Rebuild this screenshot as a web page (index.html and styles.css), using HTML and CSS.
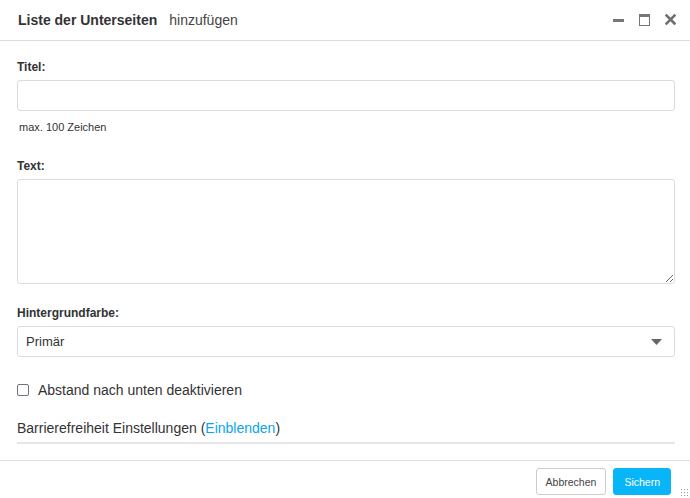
FILE: index.html
```html
<!DOCTYPE html>
<html lang="de">
<head>
  <meta charset="UTF-8" />
  <meta name="viewport" content="width=device-width, initial-scale=1.0"/>
  <title>Liste der Unterseiten hinzufügen</title>
  <link rel="stylesheet" href="styles.css">
</head>
<body>
  <div class="dialog">
    <div class="dialog-header">
      <div class="dialog-title"><b>Liste der Unterseiten</b><span>hinzufügen</span></div>
      <div class="window-buttons">
        <span class="btn-min"></span>
        <span class="btn-max"></span>
        <svg class="btn-close" width="11" height="11" viewBox="0 0 11 11">
          <path d="M1.5 1.5 L9.5 9.5 M9.5 1.5 L1.5 9.5" stroke="#707070" stroke-width="2.6" stroke-linecap="square"/>
        </svg>
      </div>
    </div>

    <div class="dialog-body">
      <label class="field-label" for="titel">Titel:</label>
      <input type="text" id="titel" class="field" />
      <div class="help">max. 100 Zeichen</div>

      <label class="field-label label-text" for="text">Text:</label>
      <textarea id="text" class="field area"></textarea>

      <label class="field-label label-bg" for="farbe">Hintergrundfarbe:</label>
      <div class="select">
        <span>Primär</span>
        <svg width="11" height="6" viewBox="0 0 11 6"><path d="M0 0 H11 L5.5 6 Z" fill="#666"/></svg>
      </div>

      <label class="check">
        <span class="box"></span>
        Abstand nach unten deaktivieren
      </label>

      <div class="a11y">Barrierefreiheit Einstellungen (<a href="#">Einblenden</a>)</div>
    </div>

    <div class="dialog-footer">
      <button class="btn btn-cancel">Abbrechen</button>
      <button class="btn btn-save">Sichern</button>
      <span class="grip"></span>
    </div>
  </div>
</body>
</html>
```

FILE: styles.css
```css
body {
  margin: 0;
  font-family: 'Liberation Sans', Arial, sans-serif;
  color: #333333;
  background: #ffffff;
}

.dialog {
  height: 498px;
  display: flex;
  flex-direction: column;
}

.dialog-header {
  height: 41px;
  flex: none;
  border-bottom: 1px solid #dddddd;
  display: flex;
  align-items: center;
  justify-content: space-between;
  padding: 0 14px 0 18px;
  box-sizing: border-box;
}

.dialog-title {
  font-size: 14px;
  margin-top: -1px;
}

.dialog-title b {
  margin-right: 12px;
}

.dialog-title span {
  color: #444444;
}

.window-buttons {
  display: flex;
  align-items: center;
  gap: 15px;
  margin-top: -1px;
}

.btn-min {
  width: 11px;
  height: 3px;
  background: #777777;
  margin-top: 1px;
}

.btn-max {
  width: 9px;
  height: 8px;
  border: 1px solid #777777;
  border-top-width: 3px;
}

.btn-close {
  display: block;
}

.dialog-body {
  flex: 1;
  padding: 18px 15px 0 17px;
}

.field-label {
  display: block;
  font-size: 12px;
  font-weight: bold;
  line-height: 16px;
  margin-bottom: 5px;
}

.field {
  display: block;
  width: 100%;
  height: 31px;
  box-sizing: border-box;
  border: 1px solid #dcdcdc;
  border-radius: 3px;
  font-family: inherit;
  font-size: 13px;
  padding: 6px 8px;
  margin: 0;
}

.area {
  height: 105px;
  resize: vertical;
}

.help {
  font-size: 11px;
  line-height: 14px;
  margin: 9px 0 0 2px;
}

.label-text {
  margin-top: 24px;
}

.label-bg {
  margin-top: 21px;
}

.select {
  height: 31px;
  box-sizing: border-box;
  border: 1px solid #dcdcdc;
  border-radius: 3px;
  display: flex;
  align-items: center;
  justify-content: space-between;
  padding: 0 12px 0 8px;
  font-size: 13px;
}

.check {
  display: flex;
  align-items: center;
  font-size: 14px;
  margin-top: 24px;
  line-height: 18px;
}

.box {
  width: 10px;
  height: 10px;
  border: 1px solid #75707f;
  border-radius: 2px;
  margin-right: 9px;
  margin-top: -1px;
}

.a11y {
  font-size: 14px;
  margin-top: 21px;
  padding-bottom: 6px;
  border-bottom: 2px solid #e6e6e6;
}

.a11y a {
  color: #0aa5ec;
  text-decoration: none;
}

.dialog-footer {
  position: relative;
  height: 38px;
  flex: none;
  box-sizing: border-box;
  border-top: 1px solid #dddddd;
  display: flex;
  justify-content: flex-end;
  align-items: flex-start;
  gap: 7px;
  padding: 7px 19px 0 0;
}

.btn {
  height: 27px;
  border-radius: 3px;
  font-family: inherit;
  font-size: 10.5px;
  padding: 0 10px;
  cursor: pointer;
}

.btn-cancel {
  background: #ffffff;
  border: 1px solid #cccccc;
  color: #444444;
  padding: 0 9px;
}

.btn-save {
  background: #08b5f7;
  border: 1px solid #08b5f7;
  color: #ffffff;
}

.grip {
  position: absolute;
  right: 2px;
  bottom: 2px;
  width: 8px;
  height: 8px;
  background-image: radial-gradient(#999999 0.7px, transparent 0.9px);
  background-size: 3px 3px;
}
```
